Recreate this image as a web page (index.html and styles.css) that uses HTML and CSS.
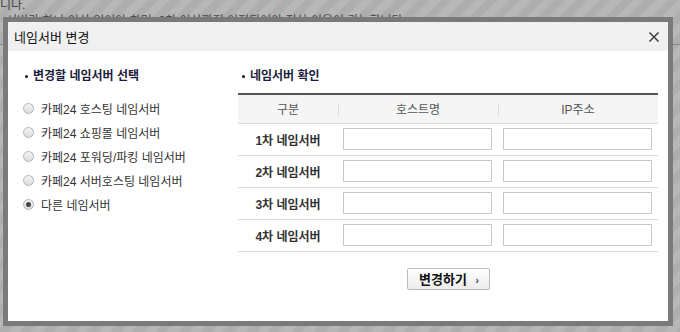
FILE: index.html
```html
<!DOCTYPE html>
<html lang="ko">
<head>
    <meta charset="UTF-8">
    <title>네임서버 변경</title>
    <link rel="stylesheet" href="styles.css">
</head>
<body>
    <div class="page-text">
        <p class="line1">니다.</p>
        <p class="line2">서버가 하나 이상 있어야 하며, 2차 이상까지 이전되어야 정상 이용이 가능합니다.</p>
        <div class="page-rule"></div>
    </div>

    <div class="dialog">
        <div class="dialog-head">
            <h1 class="dialog-title">네임서버 변경</h1>
            <svg class="close" width="10" height="10" viewBox="0 0 10 10">
                <path d="M0.5 0.5 L9.5 9.5 M9.5 0.5 L0.5 9.5" stroke="#333" stroke-width="1.4" fill="none"/>
            </svg>
        </div>

        <div class="dialog-body">
            <div class="col-left">
                <h2 class="sec-title">변경할 네임서버 선택</h2>
                <ul class="radio-list">
                    <li><span class="radio"></span>카페24 호스팅 네임서버</li>
                    <li><span class="radio"></span>카페24 쇼핑몰 네임서버</li>
                    <li><span class="radio"></span>카페24 포워딩/파킹 네임서버</li>
                    <li><span class="radio"></span>카페24 서버호스팅 네임서버</li>
                    <li><span class="radio checked"></span>다른 네임서버</li>
                </ul>
            </div>

            <div class="col-right">
                <h2 class="sec-title">네임서버 확인</h2>
                <table class="ns-table">
                    <thead>
                        <tr>
                            <th><span>구분</span></th>
                            <th><span>호스트명</span></th>
                            <th><span>IP주소</span></th>
                        </tr>
                    </thead>
                    <tbody>
                        <tr>
                            <td class="ns-label">1차 네임서버</td>
                            <td><input type="text"></td>
                            <td><input type="text"></td>
                        </tr>
                        <tr>
                            <td class="ns-label">2차 네임서버</td>
                            <td><input type="text"></td>
                            <td><input type="text"></td>
                        </tr>
                        <tr>
                            <td class="ns-label">3차 네임서버</td>
                            <td><input type="text"></td>
                            <td><input type="text"></td>
                        </tr>
                        <tr>
                            <td class="ns-label">4차 네임서버</td>
                            <td><input type="text"></td>
                            <td><input type="text"></td>
                        </tr>
                    </tbody>
                </table>
                <div class="btn-row">
                    <button class="btn-change">변경하기 <span class="arrow">›</span></button>
                </div>
            </div>
        </div>
    </div>
</body>
</html>
```

FILE: styles.css
```css
* { margin: 0; padding: 0; box-sizing: border-box; }

body {
    font-family: "Liberation Sans", "Noto Sans CJK KR", sans-serif;
    font-size: 12px;
    color: #333;
    width: 680px;
    height: 332px;
    overflow: hidden;
    position: relative;
    background: repeating-linear-gradient(135deg, #b7b7b7 0 8px, #aeaeae 8px 16px);
}

/* page behind the overlay */
.page-text { color: #444; font-size: 12px; line-height: 14px; }
.page-text .line1 { margin-top: -2px; }
.page-text .line2 { margin-top: 2px; padding-left: 6px; }
.page-rule { margin-top: 16px; border-top: 1px solid #8a8a8a; }

.dialog {
    position: absolute;
    left: 3px;
    top: 17px;
    width: 670px;
    height: 309px;
    border: 5px solid #7a7a7a;
    background: #fff;
}

.dialog-head {
    height: 29px;
    background: #f0f0f0;
    display: flex;
    align-items: center;
    justify-content: space-between;
    padding: 0 9px 0 6px;
}

.dialog-title {
    font-size: 13px;
    font-weight: normal;
    color: #111;
}

.dialog-body {
    display: flex;
    padding: 17px 10px 0 14px;
}

.col-left { width: 216px; }
.col-right { width: 420px; }

.sec-title {
    font-size: 12px;
    font-weight: bold;
    color: #1c1c3c;
    line-height: 16px;
    display: flex;
    align-items: center;
}
.sec-title::before {
    content: "";
    width: 3px;
    height: 3px;
    background: #111;
    border-radius: 50%;
    margin-right: 5px;
}
.col-left .sec-title { padding-left: 3px; }
.col-right .sec-title { padding-left: 3px; margin-left: 1px; }

.radio-list { list-style: none; margin-top: 12px; }
.radio-list li {
    height: 24px;
    display: flex;
    align-items: center;
    color: #333;
}
.radio {
    width: 11px;
    height: 11px;
    border-radius: 50%;
    border: 1px solid #b4b4b4;
    background: linear-gradient(#f4f4f4, #dcdcdc);
    margin: 0 7px 0 1px;
    position: relative;
}
.radio.checked::after {
    content: "";
    position: absolute;
    left: 2px;
    top: 2px;
    width: 5px;
    height: 5px;
    border-radius: 50%;
    background: #444;
}

.ns-table {
    margin-top: 9px;
    width: 420px;
    border-collapse: collapse;
    border-top: 2px solid #555;
}
.ns-table th {
    height: 29px;
    background: #f5f5f5;
    font-weight: normal;
    color: #555;
    border-bottom: 1px solid #dcdcdc;
    position: relative;
}
.ns-table th:first-child { width: 100px; }
.ns-table th:nth-child(2) { width: 160px; }
.ns-table th + th::before {
    content: "";
    position: absolute;
    left: 0;
    top: 9px;
    height: 13px;
    border-left: 1px solid #dcdcdc;
}

.ns-table td {
    height: 32px;
    border-bottom: 1px solid #dcdcdc;
    padding: 0 6px 0 5px;
}
.ns-table td.ns-label {
    text-align: center;
    font-weight: bold;
    color: #333;
    padding: 0;
}
.ns-table input {
    display: block;
    width: 149px;
    height: 22px;
    border: 1px solid #c8c8c8;
    background: #fff;
}

.btn-row {
    display: flex;
    justify-content: center;
    padding-top: 16px;
}
.btn-change {
    width: 83px;
    height: 22px;
    font-family: "Liberation Sans", "Noto Sans CJK KR", sans-serif;
    font-size: 13px;
    font-weight: bold;
    color: #111;
    border: 1px solid #bcbcbc;
    border-radius: 2px;
    background: linear-gradient(#fff, #ececec);
    padding-left: 2px;
}
.btn-change .arrow {
    color: #2a3a6a;
    font-size: 10px;
    margin-left: 5px;
}
```
